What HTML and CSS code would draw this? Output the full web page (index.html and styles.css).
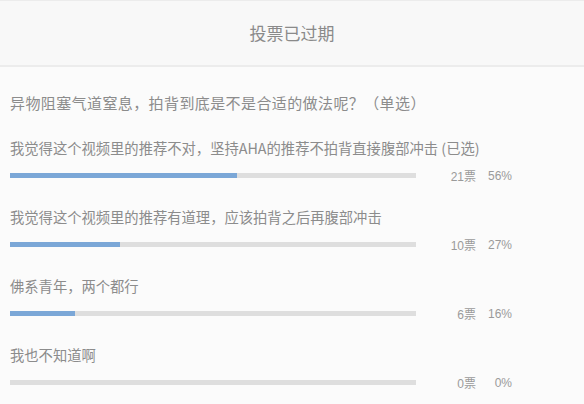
FILE: index.html
```html
<!DOCTYPE html>
<html lang="zh-CN">
<head>
  <meta charset="UTF-8">
  <title>投票</title>
  <link rel="stylesheet" href="styles.css">
</head>
<body>

  <header class="vote-header">投票已过期</header>

  <div class="poll">
    <p class="question">异物阻塞气道窒息，拍背到底是不是合适的做法呢？（单选）</p>

    <div class="option">
      <p class="option-text">我觉得这个视频里的推荐不对，坚持AHA的推荐不拍背直接腹部冲击 (已选)</p>
      <div class="result">
        <div class="track"><div class="fill" style="width: 56%"></div></div>
        <span class="votes">21票</span>
        <span class="pct">56%</span>
      </div>
    </div>

    <div class="option">
      <p class="option-text">我觉得这个视频里的推荐有道理，应该拍背之后再腹部冲击</p>
      <div class="result">
        <div class="track"><div class="fill" style="width: 27%"></div></div>
        <span class="votes">10票</span>
        <span class="pct">27%</span>
      </div>
    </div>

    <div class="option">
      <p class="option-text">佛系青年，两个都行</p>
      <div class="result">
        <div class="track"><div class="fill" style="width: 16%"></div></div>
        <span class="votes">6票</span>
        <span class="pct">16%</span>
      </div>
    </div>

    <div class="option">
      <p class="option-text">我也不知道啊</p>
      <div class="result">
        <div class="track"><div class="fill" style="width: 0%"></div></div>
        <span class="votes">0票</span>
        <span class="pct">0%</span>
      </div>
    </div>
  </div>

</body>
</html>
```

FILE: styles.css
```css
body {
  margin: 0;
  padding: 0;
  background: #fbfbfb;
  font-family: "Noto Sans CJK SC", "Liberation Sans", sans-serif;
  color: #888;
}

.vote-header {
  height: 64px;
  line-height: 64px;
  text-align: center;
  font-size: 17px;
  color: #8a8a8a;
  background: #f8f8f8;
  border-top: 1px solid #ececec;
  border-bottom: 2px solid #ececec;
}

.poll {
  padding: 0 10px;
}

.question {
  margin: 25px 0 0;
  font-size: 15px;
  line-height: 22px;
  letter-spacing: 0.4px;
  color: #8c8c8c;
}

.option {
  margin-top: 23px;
}

.option-text {
  margin: 0;
  font-size: 14.3px;
  line-height: 22px;
  color: #8c8c8c;
}

.result {
  display: flex;
  align-items: center;
  height: 15px;
  margin-top: 9px;
  font-family: "Liberation Sans", "Noto Sans CJK SC", sans-serif;
  font-size: 12px;
  color: #9a9a9a;
}

.track {
  width: 406px;
  height: 5px;
  background: #dedede;
}

.fill {
  height: 100%;
  background: #7ba7d7;
}

.votes {
  width: 60px;
  text-align: right;
}

.pct {
  width: 36px;
  text-align: right;
}
```
